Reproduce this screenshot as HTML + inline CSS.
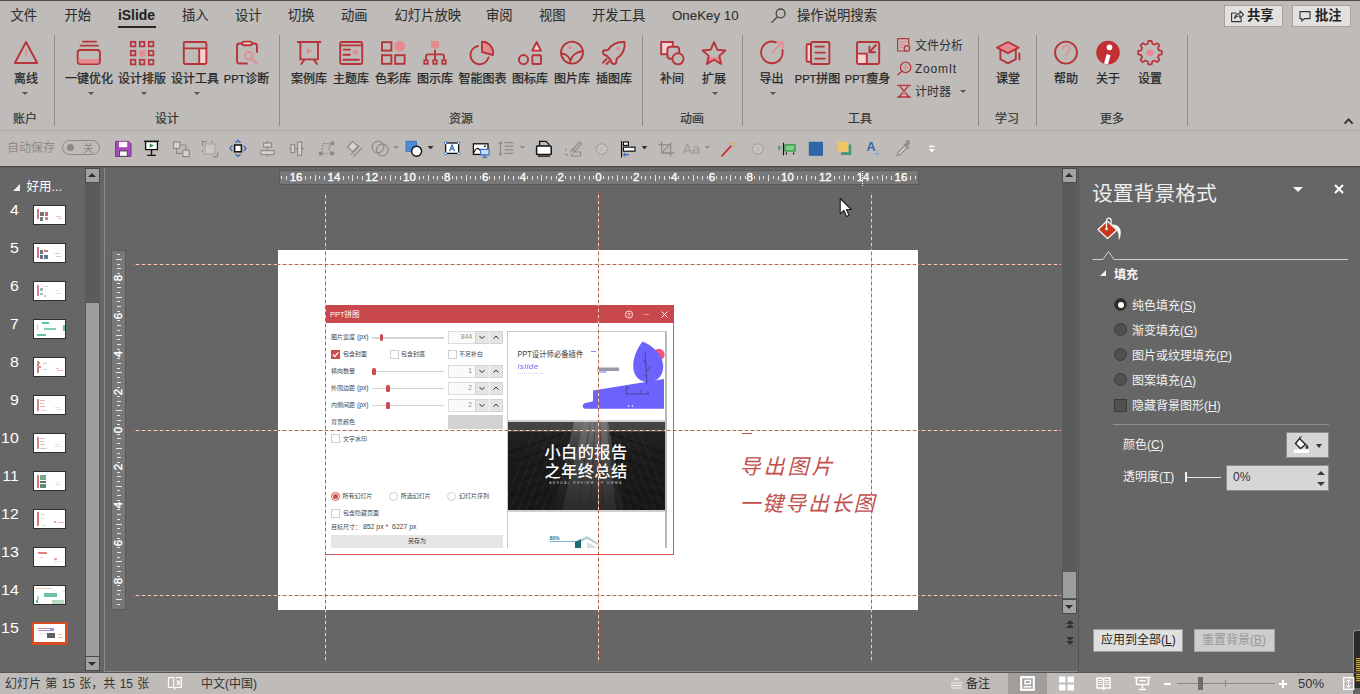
<!DOCTYPE html><html lang="zh-CN"><head><meta charset="utf-8"><title>iSlide - PowerPoint</title><style>
*{box-sizing:border-box;margin:0;padding:0}
html,body{width:1360px;height:694px;overflow:hidden;background:#666666}
body{position:relative;font-family:"Liberation Sans","Noto Sans CJK SC",sans-serif;font-size:12px;color:#2b2b2b}
.a{position:absolute}
.t{position:absolute;white-space:nowrap;line-height:1}
.c{transform:translateX(-50%)}
#ribbon{left:0;top:0;width:1360px;height:166px;background:#bfbbb8}
.tab{font-size:13.33px;top:8.7px;color:#2e2e2e;-webkit-text-stroke:0.08px #2e2e2e}
.lbl{font-size:12px;top:73.3px;color:#262626;-webkit-text-stroke:0.25px #262626}
.grp{font-size:12px;top:113.3px;color:#333;-webkit-text-stroke:0.2px #333}
.sep{width:1px;top:35px;height:91px;background:#8f8c8a}
.dd{width:0;height:0;border-left:3px solid transparent;border-right:3px solid transparent;border-top:3px solid #555}
svg{position:absolute;overflow:visible}
.w{color:#fff}
.pt{font-size:12px;color:#f2f2f2}
.d6{font-size:6px;color:#444}
</style></head><body>
<div id="ribbon" class="a">
<div class="a" style="left:0;top:0;width:1360px;height:1px;background:#4a4a4a"></div>
<div class="a" style="left:0;top:130px;width:1360px;height:1px;background:#aeaaa7"></div>
<div class="t tab" style="left:10.5px">文件</div>
<div class="t tab" style="left:64.5px">开始</div>
<div class="t tab" style="left:182px">插入</div>
<div class="t tab" style="left:235px">设计</div>
<div class="t tab" style="left:288px">切换</div>
<div class="t tab" style="left:341px">动画</div>
<div class="t tab" style="left:394.5px">幻灯片放映</div>
<div class="t tab" style="left:486px">审阅</div>
<div class="t tab" style="left:539px">视图</div>
<div class="t tab" style="left:592px">开发工具</div>
<div class="t tab" style="left:672px">OneKey 10</div>
<div class="t tab" style="left:797px">操作说明搜索</div>
<div class="t tab" style="left:118px;font-weight:bold;font-size:13.9px;color:#1f1f1f">iSlide</div>
<div class="a" style="left:118px;top:26px;width:38px;height:2px;background:#262626"></div>
<div class="a sep" style="left:54px"></div>
<div class="a sep" style="left:279px"></div>
<div class="a sep" style="left:642px"></div>
<div class="a sep" style="left:742px"></div>
<div class="a sep" style="left:978px"></div>
<div class="a sep" style="left:1036px"></div>
<div class="a sep" style="left:1187px"></div>
<div class="t lbl c" style="left:26px">离线</div>
<div class="t lbl c" style="left:89px">一键优化</div>
<div class="t lbl c" style="left:142px">设计排版</div>
<div class="t lbl c" style="left:195px">设计工具</div>
<div class="t lbl c" style="left:246.5px"><span style="font-size:11px">PPT</span>诊断</div>
<div class="t lbl c" style="left:309px">案例库</div>
<div class="t lbl c" style="left:351px">主题库</div>
<div class="t lbl c" style="left:393px">色彩库</div>
<div class="t lbl c" style="left:435px">图示库</div>
<div class="t lbl c" style="left:482.5px">智能图表</div>
<div class="t lbl c" style="left:530px">图标库</div>
<div class="t lbl c" style="left:572px">图片库</div>
<div class="t lbl c" style="left:614px">插图库</div>
<div class="t lbl c" style="left:672px">补间</div>
<div class="t lbl c" style="left:714px">扩展</div>
<div class="t lbl c" style="left:771.5px">导出</div>
<div class="t lbl c" style="left:817.5px"><span style="font-size:11px">PPT</span>拼图</div>
<div class="t lbl c" style="left:867.5px"><span style="font-size:11px">PPT</span>瘦身</div>
<div class="t lbl c" style="left:1008px">课堂</div>
<div class="t lbl c" style="left:1066px">帮助</div>
<div class="t lbl c" style="left:1108px">关于</div>
<div class="t lbl c" style="left:1150px">设置</div>
<div class="a dd" style="left:22px;top:92px"></div>
<div class="a dd" style="left:88px;top:92px"></div>
<div class="a dd" style="left:141px;top:92px"></div>
<div class="a dd" style="left:194px;top:92px"></div>
<div class="a dd" style="left:712px;top:92px"></div>
<div class="a dd" style="left:770px;top:92px"></div>
<div class="t grp c" style="left:25px">账户</div>
<div class="t grp c" style="left:167px">设计</div>
<div class="t grp c" style="left:461px">资源</div>
<div class="t grp c" style="left:692px">动画</div>
<div class="t grp c" style="left:860px">工具</div>
<div class="t grp c" style="left:1007px">学习</div>
<div class="t grp c" style="left:1112px">更多</div>
<div class="t" style="left:915px;top:40px;font-size:12px;color:#2e2e2e">文件分析</div>
<div class="t" style="left:915px;top:63px;font-size:12px;color:#2e2e2e"><span style="letter-spacing:0.75px">ZoomIt</span></div>
<div class="t" style="left:915px;top:86px;font-size:12px;color:#2e2e2e">计时器</div>
<div class="a dd" style="left:960px;top:90px"></div>
<div class="a" style="left:1224px;top:5px;width:59px;height:22px;background:#e3e1df;border:1px solid #a6a3a0"></div>
<div class="a" style="left:1292px;top:5px;width:59px;height:22px;background:#e3e1df;border:1px solid #a6a3a0"></div>
<div class="t" style="left:1247px;top:9px;font-size:13.33px;font-weight:bold;color:#222">共享</div>
<div class="t" style="left:1315px;top:9px;font-size:13.33px;font-weight:bold;color:#222">批注</div>
<svg style="left:0;top:0" width="1360" height="130" viewBox="0 0 1360 130" fill="none" stroke="#b7343a" stroke-width="1.9" stroke-linejoin="round" stroke-linecap="round">
<path d="M26 42 L37.2 63 H14.8 Z"/><path d="M26 49 V56" stroke="#e58a8e" stroke-width="1.4"/>
<path d="M83 41.6 H96 M80.5 45.6 H98"/><rect x="77.7" y="50" width="22.2" height="14" rx="2.5"/><path d="M78.5 59 H99 V61.5 a2 2 0 0 1 -2 2 H80.5 a2 2 0 0 1 -2 -2Z" fill="#e58a8e" stroke="none"/>
<rect x="130.8" y="41.8" width="4.6" height="4.6" stroke-width="1.7" stroke-linejoin="miter"/>
<rect x="139.8" y="41.8" width="4.6" height="4.6" stroke-width="1.7" stroke-linejoin="miter"/>
<rect x="148.8" y="41.8" width="4.6" height="4.6" stroke-width="1.7" stroke-linejoin="miter"/>
<rect x="130.8" y="50.8" width="4.6" height="4.6" stroke-width="1.7" stroke-linejoin="miter"/>
<rect x="139.4" y="50.4" width="6" height="6" fill="#e58a8e" stroke="none"/>
<rect x="148.8" y="50.8" width="4.6" height="4.6" stroke-width="1.7" stroke-linejoin="miter"/>
<rect x="130.8" y="59.8" width="4.6" height="4.6" stroke-width="1.7" stroke-linejoin="miter"/>
<rect x="139.8" y="59.8" width="4.6" height="4.6" stroke-width="1.7" stroke-linejoin="miter"/>
<rect x="148.8" y="59.8" width="4.6" height="4.6" stroke-width="1.7" stroke-linejoin="miter"/>
<rect x="200" y="49" width="6" height="14.5" fill="#f7d0d0" stroke="none"/><rect x="183.8" y="42" width="22.6" height="22" rx="1.5"/><path d="M184 48.4 H206 M199.2 48.4 V64"/>
<path d="M242 43.5 H239.5 a2.5 2.5 0 0 0 -2.5 2.5 V61 a2.5 2.5 0 0 0 2.5 2.5 H247 M252 43.5 H254.5 a2.5 2.5 0 0 1 2.5 2.5 V52"/><rect x="242.3" y="41.6" width="9.6" height="3.6" rx="1.8" fill="#f7d0d0"/>
<circle cx="248.8" cy="55.8" r="3.8" stroke="#e58a8e" stroke-width="1.8"/><path d="M251.8 58.8 L256.8 63.8" stroke="#e58a8e" stroke-width="1.8"/>
<path d="M297.8 42 H320.4 M300.4 42 V59.4 H318 V42 M304.5 59.6 L301.3 64 M313.8 59.6 L317 64"/><path d="M307 48 L312.5 51 L307 54Z" fill="#e58a8e" stroke="none"/>
<rect x="340.2" y="42" width="22" height="22" rx="1.5"/><path d="M340.5 45.4 H362 M343.5 49.6 H350 M343.5 54.8 H350 M343.5 59.8 H359"/><circle cx="355.4" cy="52.3" r="2.6" fill="#e58a8e" stroke="none"/>
<rect x="382" y="42.2" width="9.4" height="8.4" stroke-linejoin="miter"/><rect x="382" y="55.2" width="9.4" height="8.6" stroke-linejoin="miter"/><rect x="395.2" y="55.2" width="9.4" height="8.6" stroke-linejoin="miter"/><circle cx="399.8" cy="46.2" r="5.4" fill="#e58a8e" stroke="none"/>
<rect x="431" y="41" width="8" height="7.4" fill="#e58a8e" stroke="none"/><path d="M435 50.5 V59 M426 59 V56.4 a2 2 0 0 1 2 -2 H442 a2 2 0 0 1 2 2 V59"/>
<rect x="424.2" y="60.3" width="3.6" height="3.6" stroke-width="1.7" stroke-linejoin="miter"/>
<rect x="433.2" y="60.3" width="3.6" height="3.6" stroke-width="1.7" stroke-linejoin="miter"/>
<rect x="442.2" y="60.3" width="3.6" height="3.6" stroke-width="1.7" stroke-linejoin="miter"/>
<path d="M478 46 A9.2 9.2 0 1 0 488.5 57.5"/><path d="M482 41.8 A11 11 0 0 1 493 54.6 L482 51.8Z" fill="#e58a8e" stroke="none"/><path d="M482 41.8 A11.2 11.2 0 0 1 493 55 L482 52 Z"/>
<circle cx="523.5" cy="59.6" r="4.6"/><path d="M536.6 42 L541 50.6 H532.2Z" fill="#f7d0d0"/><rect x="532.4" y="55.2" width="8.6" height="8.8" rx="0.8"/>
<circle cx="572" cy="52.6" r="11"/><path d="M561.5 53.5 C567 54 570.5 58 570.5 63.5 M582.8 51 C576 52 571.5 56 570.8 60"/><circle cx="570" cy="47.4" r="1.8" fill="#e58a8e" stroke="none"/>
<path d="M624.6 42 C617 41.5 611 45 608 50 L603.5 50.5 C602.5 52.5 603 54 604.5 55 L606.5 55.5 L611 60.5 L611.5 63 C613 64.3 614.8 64.3 616 63 L616.8 58.5 C621.5 55.5 625.3 50 624.6 42Z"/><circle cx="618" cy="48.6" r="1.9" fill="#e58a8e" stroke="none"/><path d="M606.5 59 L602.8 62.8 M609 61.5 L606.5 64"/>
<rect x="661.2" y="42" width="11.6" height="12.2" fill="#f7d0d0" stroke-linejoin="miter"/><rect x="667.4" y="46.8" width="11.8" height="12" rx="3" fill="#bfbbb8"/><circle cx="678" cy="58.8" r="5.6" fill="#bfbbb8"/>
<clipPath id="sc"><rect x="700" y="57" width="30" height="10"/></clipPath>
<path d="M714.0 42.2 L717.3 49.7 L725.4 50.5 L719.3 55.9 L721.1 63.9 L714.0 59.8 L706.9 63.9 L708.7 55.9 L702.6 50.5 L710.7 49.7Z" fill="#e58a8e" stroke="none" clip-path="url(#sc)"/><path d="M714.0 42.2 L717.3 49.7 L725.4 50.5 L719.3 55.9 L721.1 63.9 L714.0 59.8 L706.9 63.9 L708.7 55.9 L702.6 50.5 L710.7 49.7Z"/>
<path d="M776 42.4 A10.8 10.8 0 1 0 782.4 50"/><path d="M772 52.6 L782.5 42.2 M777 42 H782.8 V47.8" stroke="#e58a8e" stroke-width="1.5"/>
<rect x="806.6" y="44.2" width="4.4" height="17.6" rx="1" fill="#f7d0d0"/><rect x="811" y="42" width="18.4" height="22" rx="1.8"/><path d="M815.4 46.6 H824 M815.4 52.6 H825 M815.4 58.6 H825"/>
<rect x="857" y="54" width="9.4" height="9.6" fill="#f7d0d0" stroke="none"/><rect x="857" y="42" width="22.2" height="22" rx="1.5"/><path d="M857.4 53.6 H866.8 V63.6 M876 45 L870 51.6 M869.4 46.6 V52.2 H875"/>
<g stroke-width="1.2"><path d="M905 51 H897.6 V38.6 H908.8 V44.5"/><path d="M900 41.6 H906.4 M900 44.4 H904.6 M900 47.2 H903" stroke="#e58a8e"/><circle cx="907" cy="48.4" r="2.8"/><circle cx="907" cy="48.4" r="0.8" fill="#e58a8e" stroke="none"/></g>
<g stroke-width="1.3"><circle cx="905.6" cy="67.4" r="5.2"/><path d="M901.8 71.2 L897.8 74.8"/><path d="M903.2 67.4 H908 M905.6 65 V69.8" stroke="#e58a8e"/></g>
<g stroke-width="1.4"><path d="M897.6 85.4 H910.4 M897.6 97 H910.4 M899.4 85.6 L908.6 96.8 M908.6 85.6 L899.4 96.8"/><path d="M901.5 94.5 L904 91.8 L906.5 94.5Z" fill="#e58a8e" stroke="none"/></g>
<path d="M1008 42 L1018.6 47.6 L1008 53.2 L997 47.6Z" fill="#e58a8e"/><path d="M1000.4 50.2 V59.2 L1008 63.4 L1015.8 59.2 V50.2"/><path d="M1019.4 53.4 V59.6" stroke-width="1.9"/>
<circle cx="1066" cy="52.6" r="11"/><path d="M1062.6 49 a3.5 3.5 0 1 1 5.2 3 c-1.4 0.9 -1.8 1.6 -1.8 3.2" stroke="#e58a8e" stroke-width="1.5"/><circle cx="1066" cy="58.6" r="1" fill="#e58a8e" stroke="none"/>
<circle cx="1108" cy="52.6" r="11.8" fill="#c12f33" stroke="none"/><circle cx="1109.5" cy="47.4" r="2.8" fill="#fff" stroke="none"/><path d="M1108.6 54.6 L1106 64" stroke="#fff" stroke-width="4" stroke-linecap="butt"/>
<path d="M1148.3 40.8 L1151.7 40.8 L1152.3 43.7 L1154.7 44.7 L1157.2 43.1 L1159.5 45.4 L1157.9 47.9 L1158.9 50.3 L1161.8 50.9 L1161.8 54.3 L1158.9 54.9 L1157.9 57.3 L1159.5 59.8 L1157.2 62.1 L1154.7 60.5 L1152.3 61.5 L1151.7 64.4 L1148.3 64.4 L1147.7 61.5 L1145.3 60.5 L1142.8 62.1 L1140.5 59.8 L1142.1 57.3 L1141.1 54.9 L1138.2 54.3 L1138.2 50.9 L1141.1 50.3 L1142.1 47.9 L1140.5 45.4 L1142.8 43.1 L1145.3 44.7 L1147.7 43.7Z" stroke-width="1.7"/><circle cx="1150" cy="52.8" r="3.4" fill="#e58a8e" stroke="none"/>
<g stroke="#444" stroke-width="1.3"><circle cx="780.6" cy="13.4" r="4.4"/><path d="M777.4 16.8 L771.8 22.4"/></g>
<g stroke="#333" stroke-width="1.1"><path d="M1236 13 H1231.6 V21.6 H1241.2 V18.5 M1234.5 18.5 C1235 15 1237.5 13.6 1240 13.6 V11 L1243.6 14.6 L1240 18 V15.8 C1237.8 15.8 1236 16.6 1234.5 18.5Z"/><path d="M1300 11.6 H1310 V18.6 H1304.4 L1301.8 21.2 V18.6 H1300Z"/></g>
<path d="M1344.6 123.6 L1348.6 119.4 L1352.6 123.6" stroke="#333" stroke-width="1.9" stroke-linecap="butt" stroke-linejoin="miter"/>
</svg>
<div class="t" style="left:7px;top:142px;font-size:12px;color:#8d8a88">自动保存</div>
<div class="a" style="left:62px;top:140px;width:38px;height:15px;border:1px solid #8a8785;border-radius:8px"></div>
<div class="a" style="left:67px;top:144px;width:7px;height:7px;border-radius:4px;background:#8a8785"></div>
<div class="t" style="left:83px;top:142.5px;font-size:10.5px;color:#8a8785">关</div>
<svg style="left:0;top:131px" width="1360" height="35" viewBox="0 131 1360 35" fill="none" stroke-width="1.2">
<path d="M115.6 141.4 H128.6 L131 143.8 V156.4 H115.6Z" fill="#a64fb6" stroke="#7a2f8a" stroke-width="1"/><rect x="119" y="141.8" width="8.2" height="5.4" fill="#fff" stroke="none"/><rect x="119.6" y="151" width="7.6" height="5.2" fill="#fff" stroke="#3a3a3a" stroke-width="0.8"/>
<path d="M144 141.3 H159" stroke="#111" stroke-width="1.4"/><rect x="145.6" y="141.6" width="11.8" height="8" fill="#fff" stroke="#111" stroke-width="1.3"/><path d="M149.6 143.4 L154 145.6 L149.6 147.8Z" fill="#2d9a4b" stroke="none"/><path d="M151.5 149.8 V155 M147.2 155.4 H155.8" stroke="#111" stroke-width="1.4"/>
<g stroke="#8e8b89"><rect x="173.5" y="142" width="6.4" height="6.4" fill="#d5d2d0"/><rect x="182.8" y="150.2" width="6.4" height="6.4" fill="#d5d2d0"/><path d="M180 145 H186 V150 M176.6 148.5 V153.4 H182.6"/></g>
<g stroke="#8e8b89"><rect x="205" y="144" width="10" height="10" fill="#cbc8c5" stroke="#a9a6a3"/><path d="M202.5 146 V141.6 H207 M213 156.6 H217.6 V152 M202.5 150 V152 M211 141.6 H213"/></g>
<rect x="234.6" y="145" width="6.8" height="6.8" fill="#fff" stroke="#111" stroke-width="1.5"/><path d="M235.4 142.6 L238 140.4 L240.6 142.6 M235.4 154.2 L238 156.4 L240.6 154.2 M232.2 145.8 L230 148.4 L232.2 151 M243.8 145.8 L246 148.4 L243.8 151" stroke="#3f6ec0" stroke-width="1.4"/>
<g stroke="#8e8b89"><rect x="263.5" y="143" width="8" height="4" fill="#d5d2d0"/><rect x="261" y="150.6" width="13" height="4" fill="#d5d2d0"/><path d="M267.5 141 V143 M267.5 147 V150.6 M267.5 154.6 V157"/></g>
<g stroke="#8e8b89"><rect x="291" y="144.6" width="3.6" height="8" fill="#d5d2d0"/><rect x="297.6" y="142" width="4" height="13.4" fill="#d5d2d0"/><path d="M289 148.6 H291 M294.6 148.6 H297.6 M301.6 148.6 H304"/></g>
<g stroke="#8e8b89"><path d="M321 153.5 L323.5 143.6 H331.6 L328.5 148 L331.6 153.5Z" stroke-dasharray="2 1.4"/><rect x="319.4" y="152.2" width="2.6" height="2.6" fill="#8e8b89"/><rect x="331" y="142" width="2.6" height="2.6" fill="#8e8b89"/><rect x="331" y="152.2" width="2.6" height="2.6" fill="#8e8b89"/></g>
<g stroke="#8e8b89"><path d="M352.5 141.6 L358 146 L353 151.6 L347.6 147Z" fill="#d8d5d3"/><path d="M353.5 156.6 L362.4 147.4 M351 154.6 L359.6 145.6"/></g>
<g stroke="#8e8b89"><circle cx="378" cy="147" r="5.8"/><circle cx="382.4" cy="150" r="5.8"/></g><path d="M393.4 146 H398.6 L396 149Z" fill="#8e8b89"/>
<rect x="406" y="141.2" width="10.6" height="10.2" fill="#4d8ad8" stroke="#3a6fb8" stroke-width="0.8"/><circle cx="416.6" cy="151.2" r="5" fill="#fff" stroke="#111" stroke-width="1.4"/><path d="M427.6 146 H433.6 L430.6 149.4Z" fill="#333"/>
<rect x="445.6" y="143" width="13" height="10.4" fill="#fff" stroke="#111" stroke-width="1.3"/><path d="M449.6 151.2 L452.1 145 L454.6 151.2 M450.5 149.2 H453.7" stroke="#3f6ec0" stroke-width="1.3"/>
<circle cx="445.6" cy="143" r="1.3" fill="#fff" stroke="#3f6ec0" stroke-width="0.9"/>
<circle cx="458.6" cy="143" r="1.3" fill="#fff" stroke="#3f6ec0" stroke-width="0.9"/>
<circle cx="445.6" cy="153.4" r="1.3" fill="#fff" stroke="#3f6ec0" stroke-width="0.9"/>
<circle cx="458.6" cy="153.4" r="1.3" fill="#fff" stroke="#3f6ec0" stroke-width="0.9"/>
<rect x="473.4" y="143.8" width="14.6" height="10.6" fill="#fff" stroke="#111" stroke-width="1.3"/><path d="M474 152.5 C475.5 148 478 147 480 150.5" stroke="#111" stroke-width="1.1"/><rect x="484.2" y="145.4" width="1.6" height="1.6" fill="#111"/><rect x="480.6" y="149.4" width="8.4" height="5.4" fill="#cfe0f6" stroke="#3f6ec0" stroke-width="1.2"/><path d="M484.8 155 V157 M482.4 157.4 H487.2" stroke="#3f6ec0" stroke-width="1.2"/>
<g stroke="#8e8b89"><path d="M504.6 142.6 H513.6 M504.6 146.2 H513.6 M504.6 149.8 H513.6 M504.6 153.4 H513.6 M500.4 142.4 V155 M498.6 144.2 L500.4 142.2 L502.2 144.2 M498.6 153.2 L500.4 155.2 L502.2 153.2"/></g><path d="M520 146 H525 L522.5 149Z" fill="#8e8b89"/>
<path d="M539.6 146 V141.4 H546 L549 144.4 V146" stroke="#111" stroke-width="1.3"/><rect x="536.6" y="146" width="14.6" height="8.6" rx="0.8" fill="#fff" stroke="#111" stroke-width="1.5"/><path d="M538 156.2 H550" stroke="#111" stroke-width="1.2"/>
<g stroke="#8e8b89"><path d="M570.5 152 L579.5 142 L581.4 143.8 L573 153.4"/><path d="M565.6 150.4 V148.4 M565.6 154.8 H568 M572 148.6 L575.6 152 H580.6 V156 H571.6 V154"/><path d="M565.6 153.4 V155" /></g>
<circle cx="601.7" cy="149" r="5.2" stroke="#a9a6a3" stroke-width="2.2" stroke-dasharray="2.2 1"/><circle cx="601.7" cy="149" r="3.6" stroke="#d4d1cf" stroke-width="1"/>
<circle cx="757.8" cy="149" r="5.2" stroke="#a9a6a3" stroke-width="2.2" stroke-dasharray="2.2 1"/><circle cx="757.8" cy="149" r="3.6" stroke="#d4d1cf" stroke-width="1"/>
<path d="M621.5 141 V157.4" stroke="#111" stroke-width="1.1"/><rect x="623.4" y="142" width="5" height="3.4" fill="#fff" stroke="#111" stroke-width="1.2"/><rect x="623.4" y="147.2" width="11.6" height="4" fill="#fff" stroke="#111" stroke-width="1.2"/><path d="M623.4 154.6 H629 M625.4 152.8 L623.4 154.6 L625.4 156.4" stroke="#3f6ec0" stroke-width="1.1"/><path d="M641.6 146 H647.4 L644.5 149.4Z" fill="#333"/>
<g stroke="#8e8b89" stroke-width="1.3"><path d="M661.6 141.4 V153 H674 M658.4 144.6 H670.6 V156.6 M662 152.6 L671.4 142.6"/></g>
<text x="682.6" y="154.2" font-family="Liberation Sans,sans-serif" font-size="14.5" fill="#9c9996">Aa</text><path d="M705 146 H710 L707.5 149Z" fill="#8e8b89"/>
<path d="M721.6 156.4 L731.4 145.6" stroke="#cc3236" stroke-width="1.9"/><path d="M733 141.6 V144 M735.6 146.4 H733.4 M734.6 142.8 L733.2 144.2 M729.6 142.4 L730.6 143.6" stroke="#e8a03a" stroke-width="1"/>
<rect x="785" y="144.8" width="10" height="6.2" fill="#7fcf86" stroke="#2f8f43" stroke-width="1.2"/><path d="M783.5 142.6 V155.4" stroke="#111" stroke-width="1.1"/><path d="M779 145.6 V150.6 M779 147.8 H781.6" stroke="#2f8f43" stroke-width="1.1"/><path d="M786.4 152.6 V154.4 M793.6 152.6 V154.4" stroke="#111" stroke-width="1.2"/>
<rect x="808.8" y="141.8" width="14.2" height="14" fill="#2f64a8"/>
<path d="M850 144.6 V153.6 H841" stroke="#3f9a6a" stroke-width="2.6"/><rect x="838" y="141.8" width="10.2" height="9.8" fill="#f2c463"/>
<text x="866.6" y="151.4" font-family="Liberation Sans,sans-serif" font-weight="bold" font-size="12.5" fill="#3a66b0">A</text><path d="M874.6 153.6 H880 M877.3 151 V156.4" stroke="#7fa6dc" stroke-width="1"/>
<g stroke="#8e8b89"><path d="M897 155.6 L898 152.6 L905.4 145 L907.6 147.2 L900 154.6Z" fill="#d5d2d0"/><path d="M904.2 143.8 L908.8 148.4 M906.6 146 L909 143.4 a1.6 1.6 0 0 0 -2.2 -2.2Z" stroke-width="1.8"/></g>
<path d="M929 146.4 H934.6" stroke="#fff" stroke-width="1.4"/><path d="M928.8 149 H934.8 L931.8 152.4Z" fill="#fff"/>
</svg>
</div>
<div class="a" style="left:0;top:166px;width:1360px;height:1px;background:#4c4c4c"></div>
<div class="a" style="left:0;top:167px;width:1360px;height:1px;background:#5c5c5c"></div>
<div class="a" style="left:85px;top:168px;width:15px;height:503px;background:#5b5b5b"></div>
<div class="a" style="left:85px;top:168px;width:15px;height:15px;background:#a3a3a3;border:1px solid #4a4a4a"></div>
<div class="a" style="left:88px;top:173px;width:0;height:0;border-left:4px solid transparent;border-right:4px solid transparent;border-bottom:4px solid #2e2e2e"></div>
<div class="a" style="left:85px;top:302px;width:15px;height:355px;background:#9c9c9c;border:1px solid #555"></div>
<div class="a" style="left:85px;top:656px;width:15px;height:15px;background:#a3a3a3;border:1px solid #4a4a4a"></div>
<div class="a" style="left:88px;top:662px;width:0;height:0;border-left:4px solid transparent;border-right:4px solid transparent;border-top:4px solid #2e2e2e"></div>
<div class="a" style="left:104px;top:168px;width:1px;height:504px;background:#8b8b8b"></div>
<div class="a" style="left:104px;top:671px;width:975px;height:1px;background:#8b8b8b"></div>
<div class="a" style="left:13px;top:184px;width:0;height:0;border-left:7px solid transparent;border-bottom:7px solid #f0f0f0"></div>
<div class="t w" style="left:26.5px;top:181px;font-size:12.5px">好用...</div>
<div class="t w" style="left:0;width:18.8px;text-align:right;top:202.4px;font-size:15px;transform:scaleX(1.06);transform-origin:100% 50%">4</div>
<div class="a" style="left:33px;top:205px;width:33px;height:20px;background:#fff;border:1px solid #2f2f2f;overflow:hidden"><div class="a" style="left:0;top:0;opacity:0.72"><i class="a" style="left:3px;top:3px;width:1.5px;height:10px;background:#c44"></i><i class="a" style="left:6px;top:6px;width:4px;height:4px;background:#345"></i><i class="a" style="left:11px;top:6px;width:3px;height:4px;background:#a34"></i><i class="a" style="left:6px;top:11px;width:3px;height:4px;background:#345"></i><i class="a" style="left:11px;top:11px;width:3px;height:3px;background:#b55"></i><i class="a" style="left:22px;top:10px;width:5px;height:1px;background:#daa"></i><i class="a" style="left:24px;top:12px;width:4px;height:1px;background:#daa"></i></div></div>
<div class="t w" style="left:0;width:18.8px;text-align:right;top:240.4px;font-size:15px;transform:scaleX(1.06);transform-origin:100% 50%">5</div>
<div class="a" style="left:33px;top:243px;width:33px;height:20px;background:#fff;border:1px solid #2f2f2f;overflow:hidden"><div class="a" style="left:0;top:0;opacity:0.72"><i class="a" style="left:3px;top:3px;width:1.5px;height:11px;background:#c44"></i><i class="a" style="left:6px;top:6px;width:3px;height:4px;background:#345"></i><i class="a" style="left:10px;top:6px;width:4px;height:2px;background:#b44"></i><i class="a" style="left:6px;top:11px;width:3px;height:4px;background:#245"></i><i class="a" style="left:10px;top:11px;width:4px;height:4px;background:#246"></i><i class="a" style="left:21px;top:9px;width:5px;height:1px;background:#daa"></i><i class="a" style="left:22px;top:12px;width:5px;height:1px;background:#daa"></i></div></div>
<div class="t w" style="left:0;width:18.8px;text-align:right;top:278.4px;font-size:15px;transform:scaleX(1.06);transform-origin:100% 50%">6</div>
<div class="a" style="left:33px;top:281px;width:33px;height:20px;background:#fff;border:1px solid #2f2f2f;overflow:hidden"><div class="a" style="left:0;top:0;opacity:0.72"><i class="a" style="left:3px;top:3px;width:1.5px;height:11px;background:#c55"></i><i class="a" style="left:6px;top:6px;width:3px;height:3px;background:#79a"></i><i class="a" style="left:10px;top:4px;width:4px;height:1px;background:#bcd"></i><i class="a" style="left:6px;top:11px;width:3px;height:2px;background:#7aa"></i><i class="a" style="left:10px;top:13px;width:2px;height:2px;background:#9bb"></i><i class="a" style="left:21px;top:8px;width:4px;height:1px;background:#ecc"></i><i class="a" style="left:22px;top:11px;width:5px;height:1px;background:#ecc"></i></div></div>
<div class="t w" style="left:0;width:18.8px;text-align:right;top:316.4px;font-size:15px;transform:scaleX(1.06);transform-origin:100% 50%">7</div>
<div class="a" style="left:33px;top:319px;width:33px;height:20px;background:#fff;border:1px solid #2f2f2f;overflow:hidden"><div class="a" style="left:0;top:0;opacity:0.72"><i class="a" style="left:8px;top:2px;width:7px;height:1.5px;background:#2a8"></i><i class="a" style="left:29px;top:5px;width:1.5px;height:6px;background:#2a8"></i><i class="a" style="left:3px;top:14px;width:9px;height:2px;background:#2a8"></i><i class="a" style="left:10px;top:8px;width:12px;height:1.5px;background:#5b9"></i><i class="a" style="left:3px;top:4px;width:1px;height:6px;background:#8cb"></i></div></div>
<div class="t w" style="left:0;width:18.8px;text-align:right;top:354.4px;font-size:15px;transform:scaleX(1.06);transform-origin:100% 50%">8</div>
<div class="a" style="left:33px;top:357px;width:33px;height:20px;background:#fff;border:1px solid #2f2f2f;overflow:hidden"><div class="a" style="left:0;top:0;opacity:0.72"><i class="a" style="left:3px;top:3px;width:2px;height:12px;background:#c44"></i><i class="a" style="left:3px;top:4px;width:3px;height:2px;background:#c66"></i><i class="a" style="left:3px;top:8px;width:4px;height:2px;background:#c66"></i><i class="a" style="left:9px;top:5px;width:4px;height:1px;background:#abc"></i><i class="a" style="left:9px;top:11px;width:4px;height:1px;background:#abc"></i><i class="a" style="left:22px;top:10px;width:3px;height:1px;background:#e99"></i><i class="a" style="left:23px;top:12px;width:6px;height:1px;background:#e99"></i></div></div>
<div class="t w" style="left:0;width:18.8px;text-align:right;top:392.4px;font-size:15px;transform:scaleX(1.06);transform-origin:100% 50%">9</div>
<div class="a" style="left:33px;top:395px;width:33px;height:20px;background:#fff;border:1px solid #2f2f2f;overflow:hidden"><div class="a" style="left:0;top:0;opacity:0.72"><i class="a" style="left:3px;top:3px;width:1.5px;height:12px;background:#c55"></i><i class="a" style="left:6px;top:4px;width:5px;height:1px;background:#d99"></i><i class="a" style="left:6px;top:7px;width:4px;height:1px;background:#bbb"></i><i class="a" style="left:6px;top:10px;width:5px;height:1px;background:#d99"></i><i class="a" style="left:7px;top:14px;width:5px;height:1px;background:#bcd"></i><i class="a" style="left:21px;top:11px;width:5px;height:1px;background:#ecc"></i><i class="a" style="left:22px;top:13px;width:6px;height:1px;background:#ecc"></i></div></div>
<div class="t w" style="left:0;width:18.8px;text-align:right;top:430.4px;font-size:15px;transform:scaleX(1.06);transform-origin:100% 50%">10</div>
<div class="a" style="left:33px;top:433px;width:33px;height:20px;background:#fff;border:1px solid #2f2f2f;overflow:hidden"><div class="a" style="left:0;top:0;opacity:0.72"><i class="a" style="left:3px;top:3px;width:1.5px;height:12px;background:#c55"></i><i class="a" style="left:6px;top:4px;width:5px;height:1px;background:#caa"></i><i class="a" style="left:6px;top:7px;width:4px;height:1px;background:#bbb"></i><i class="a" style="left:6px;top:10px;width:5px;height:1px;background:#caa"></i><i class="a" style="left:6px;top:14px;width:7px;height:1px;background:#bbb"></i><i class="a" style="left:21px;top:10px;width:4px;height:1px;background:#ecc"></i><i class="a" style="left:21px;top:12px;width:6px;height:1px;background:#ecc"></i></div></div>
<div class="t w" style="left:0;width:18.8px;text-align:right;top:468.4px;font-size:15px;transform:scaleX(1.06);transform-origin:100% 50%">11</div>
<div class="a" style="left:33px;top:471px;width:33px;height:20px;background:#fff;border:1px solid #2f2f2f;overflow:hidden"><div class="a" style="left:0;top:0;opacity:0.72"><i class="a" style="left:3px;top:3px;width:1.5px;height:13px;background:#c44"></i><i class="a" style="left:6px;top:3px;width:6px;height:5px;background:#486"></i><i class="a" style="left:6px;top:9px;width:6px;height:2px;background:#333"></i><i class="a" style="left:6px;top:12px;width:6px;height:4px;background:#264"></i><i class="a" style="left:21px;top:10px;width:4px;height:1px;background:#ecc"></i><i class="a" style="left:22px;top:12px;width:5px;height:1px;background:#ecc"></i></div></div>
<div class="t w" style="left:0;width:18.8px;text-align:right;top:506.4px;font-size:15px;transform:scaleX(1.06);transform-origin:100% 50%">12</div>
<div class="a" style="left:33px;top:509px;width:33px;height:20px;background:#fff;border:1px solid #2f2f2f;overflow:hidden"><div class="a" style="left:0;top:0;opacity:0.72"><i class="a" style="left:3px;top:2px;width:1.5px;height:14px;background:#c44"></i><i class="a" style="left:7px;top:4px;width:4px;height:1px;background:#bcd"></i><i class="a" style="left:7px;top:8px;width:3px;height:1px;background:#ccc"></i><i class="a" style="left:8px;top:15px;width:5px;height:1px;background:#bdd"></i><i class="a" style="left:20px;top:11px;width:2px;height:2px;background:#d88"></i><i class="a" style="left:24px;top:12px;width:6px;height:1px;background:#e99"></i></div></div>
<div class="t w" style="left:0;width:18.8px;text-align:right;top:544.4px;font-size:15px;transform:scaleX(1.06);transform-origin:100% 50%">13</div>
<div class="a" style="left:33px;top:547px;width:33px;height:20px;background:#fff;border:1px solid #2f2f2f;overflow:hidden"><div class="a" style="left:0;top:0;opacity:0.72"><i class="a" style="left:4px;top:4px;width:9px;height:1.5px;background:#c55"></i><i class="a" style="left:5px;top:9px;width:4px;height:1px;background:#ecc"></i><i class="a" style="left:20px;top:10px;width:3px;height:2px;background:#d88"></i><i class="a" style="left:20px;top:13px;width:5px;height:1px;background:#ecc"></i></div></div>
<div class="t w" style="left:0;width:18.8px;text-align:right;top:582.4px;font-size:15px;transform:scaleX(1.06);transform-origin:100% 50%">14</div>
<div class="a" style="left:33px;top:585px;width:33px;height:20px;background:#fff;border:1px solid #2f2f2f;overflow:hidden"><div class="a" style="left:0;top:0;opacity:0.72"><i class="a" style="left:2px;top:2px;width:16px;height:1px;background:#eb8"></i><i class="a" style="left:10px;top:7px;width:13px;height:4px;background:#3a8"></i><i class="a" style="left:3px;top:10px;width:2px;height:4px;background:#8c9"></i><i class="a" style="left:18px;top:14px;width:12px;height:4px;background:#9ca"></i><i class="a" style="left:2px;top:14px;width:2px;height:3px;background:#2a7"></i><i class="a" style="left:29px;top:4px;width:2px;height:2px;background:#ddd"></i></div></div>
<div class="t w" style="left:0;width:18.8px;text-align:right;top:620.4px;font-size:15px;transform:scaleX(1.06);transform-origin:100% 50%">15</div>
<div class="a" style="left:31.7px;top:621.5px;width:36.6px;height:23.4px;background:#d84c22"></div>
<div class="a" style="left:33px;top:623px;width:33px;height:20px;background:#fff;border:1px solid #d84c22;overflow:hidden"><div class="a" style="left:0;top:0;opacity:0.72"><i class="a" style="left:4px;top:4px;width:15px;height:1px;background:#b66"></i><i class="a" style="left:5px;top:6px;width:13px;height:1px;background:#85c"></i><i class="a" style="left:16px;top:4px;width:4px;height:3px;background:#76d"></i><i class="a" style="left:5px;top:9px;width:8px;height:1px;background:#ddd"></i><i class="a" style="left:13px;top:9px;width:8px;height:5px;background:#222"></i><i class="a" style="left:24px;top:10px;width:4px;height:1px;background:#da6"></i><i class="a" style="left:24px;top:13px;width:5px;height:1px;background:#da6"></i></div></div>
<div class="a" style="left:279px;top:170px;width:640px;height:15px;background:#787878;border:1px solid #5a5a5a"></div>
<i class="a" style="left:281.4px;top:176.0px;width:1px;height:3px;background:#e4e4e4"></i>
<i class="a" style="left:286.2px;top:175.5px;width:1px;height:4px;background:#e4e4e4"></i>
<i class="a" style="left:305.1px;top:175.5px;width:1px;height:4px;background:#e4e4e4"></i>
<i class="a" style="left:309.8px;top:176.0px;width:1px;height:3px;background:#e4e4e4"></i>
<i class="a" style="left:314.5px;top:174.5px;width:1px;height:6px;background:#e4e4e4"></i>
<i class="a" style="left:319.2px;top:176.0px;width:1px;height:3px;background:#e4e4e4"></i>
<i class="a" style="left:324.0px;top:175.5px;width:1px;height:4px;background:#e4e4e4"></i>
<i class="a" style="left:342.9px;top:175.5px;width:1px;height:4px;background:#e4e4e4"></i>
<i class="a" style="left:347.6px;top:176.0px;width:1px;height:3px;background:#e4e4e4"></i>
<i class="a" style="left:352.3px;top:174.5px;width:1px;height:6px;background:#e4e4e4"></i>
<i class="a" style="left:357.0px;top:176.0px;width:1px;height:3px;background:#e4e4e4"></i>
<i class="a" style="left:361.8px;top:175.5px;width:1px;height:4px;background:#e4e4e4"></i>
<i class="a" style="left:380.6px;top:175.5px;width:1px;height:4px;background:#e4e4e4"></i>
<i class="a" style="left:385.4px;top:176.0px;width:1px;height:3px;background:#e4e4e4"></i>
<i class="a" style="left:390.1px;top:174.5px;width:1px;height:6px;background:#e4e4e4"></i>
<i class="a" style="left:394.8px;top:176.0px;width:1px;height:3px;background:#e4e4e4"></i>
<i class="a" style="left:399.6px;top:175.5px;width:1px;height:4px;background:#e4e4e4"></i>
<i class="a" style="left:418.5px;top:175.5px;width:1px;height:4px;background:#e4e4e4"></i>
<i class="a" style="left:423.2px;top:176.0px;width:1px;height:3px;background:#e4e4e4"></i>
<i class="a" style="left:427.9px;top:174.5px;width:1px;height:6px;background:#e4e4e4"></i>
<i class="a" style="left:432.6px;top:176.0px;width:1px;height:3px;background:#e4e4e4"></i>
<i class="a" style="left:437.4px;top:175.5px;width:1px;height:4px;background:#e4e4e4"></i>
<i class="a" style="left:442.1px;top:176.0px;width:1px;height:3px;background:#e4e4e4"></i>
<i class="a" style="left:451.5px;top:176.0px;width:1px;height:3px;background:#e4e4e4"></i>
<i class="a" style="left:456.2px;top:175.5px;width:1px;height:4px;background:#e4e4e4"></i>
<i class="a" style="left:461.0px;top:176.0px;width:1px;height:3px;background:#e4e4e4"></i>
<i class="a" style="left:465.7px;top:174.5px;width:1px;height:6px;background:#e4e4e4"></i>
<i class="a" style="left:470.4px;top:176.0px;width:1px;height:3px;background:#e4e4e4"></i>
<i class="a" style="left:475.1px;top:175.5px;width:1px;height:4px;background:#e4e4e4"></i>
<i class="a" style="left:479.9px;top:176.0px;width:1px;height:3px;background:#e4e4e4"></i>
<i class="a" style="left:489.3px;top:176.0px;width:1px;height:3px;background:#e4e4e4"></i>
<i class="a" style="left:494.1px;top:175.5px;width:1px;height:4px;background:#e4e4e4"></i>
<i class="a" style="left:498.8px;top:176.0px;width:1px;height:3px;background:#e4e4e4"></i>
<i class="a" style="left:503.5px;top:174.5px;width:1px;height:6px;background:#e4e4e4"></i>
<i class="a" style="left:508.2px;top:176.0px;width:1px;height:3px;background:#e4e4e4"></i>
<i class="a" style="left:513.0px;top:175.5px;width:1px;height:4px;background:#e4e4e4"></i>
<i class="a" style="left:517.7px;top:176.0px;width:1px;height:3px;background:#e4e4e4"></i>
<i class="a" style="left:527.1px;top:176.0px;width:1px;height:3px;background:#e4e4e4"></i>
<i class="a" style="left:531.9px;top:175.5px;width:1px;height:4px;background:#e4e4e4"></i>
<i class="a" style="left:536.6px;top:176.0px;width:1px;height:3px;background:#e4e4e4"></i>
<i class="a" style="left:541.3px;top:174.5px;width:1px;height:6px;background:#e4e4e4"></i>
<i class="a" style="left:546.0px;top:176.0px;width:1px;height:3px;background:#e4e4e4"></i>
<i class="a" style="left:550.8px;top:175.5px;width:1px;height:4px;background:#e4e4e4"></i>
<i class="a" style="left:555.5px;top:176.0px;width:1px;height:3px;background:#e4e4e4"></i>
<i class="a" style="left:564.9px;top:176.0px;width:1px;height:3px;background:#e4e4e4"></i>
<i class="a" style="left:569.6px;top:175.5px;width:1px;height:4px;background:#e4e4e4"></i>
<i class="a" style="left:574.4px;top:176.0px;width:1px;height:3px;background:#e4e4e4"></i>
<i class="a" style="left:579.1px;top:174.5px;width:1px;height:6px;background:#e4e4e4"></i>
<i class="a" style="left:583.8px;top:176.0px;width:1px;height:3px;background:#e4e4e4"></i>
<i class="a" style="left:588.5px;top:175.5px;width:1px;height:4px;background:#e4e4e4"></i>
<i class="a" style="left:593.3px;top:176.0px;width:1px;height:3px;background:#e4e4e4"></i>
<i class="a" style="left:602.7px;top:176.0px;width:1px;height:3px;background:#e4e4e4"></i>
<i class="a" style="left:607.5px;top:175.5px;width:1px;height:4px;background:#e4e4e4"></i>
<i class="a" style="left:612.2px;top:176.0px;width:1px;height:3px;background:#e4e4e4"></i>
<i class="a" style="left:616.9px;top:174.5px;width:1px;height:6px;background:#e4e4e4"></i>
<i class="a" style="left:621.6px;top:176.0px;width:1px;height:3px;background:#e4e4e4"></i>
<i class="a" style="left:626.4px;top:175.5px;width:1px;height:4px;background:#e4e4e4"></i>
<i class="a" style="left:631.1px;top:176.0px;width:1px;height:3px;background:#e4e4e4"></i>
<i class="a" style="left:640.5px;top:176.0px;width:1px;height:3px;background:#e4e4e4"></i>
<i class="a" style="left:645.2px;top:175.5px;width:1px;height:4px;background:#e4e4e4"></i>
<i class="a" style="left:650.0px;top:176.0px;width:1px;height:3px;background:#e4e4e4"></i>
<i class="a" style="left:654.7px;top:174.5px;width:1px;height:6px;background:#e4e4e4"></i>
<i class="a" style="left:659.4px;top:176.0px;width:1px;height:3px;background:#e4e4e4"></i>
<i class="a" style="left:664.1px;top:175.5px;width:1px;height:4px;background:#e4e4e4"></i>
<i class="a" style="left:668.9px;top:176.0px;width:1px;height:3px;background:#e4e4e4"></i>
<i class="a" style="left:678.3px;top:176.0px;width:1px;height:3px;background:#e4e4e4"></i>
<i class="a" style="left:683.0px;top:175.5px;width:1px;height:4px;background:#e4e4e4"></i>
<i class="a" style="left:687.8px;top:176.0px;width:1px;height:3px;background:#e4e4e4"></i>
<i class="a" style="left:692.5px;top:174.5px;width:1px;height:6px;background:#e4e4e4"></i>
<i class="a" style="left:697.2px;top:176.0px;width:1px;height:3px;background:#e4e4e4"></i>
<i class="a" style="left:702.0px;top:175.5px;width:1px;height:4px;background:#e4e4e4"></i>
<i class="a" style="left:706.7px;top:176.0px;width:1px;height:3px;background:#e4e4e4"></i>
<i class="a" style="left:716.1px;top:176.0px;width:1px;height:3px;background:#e4e4e4"></i>
<i class="a" style="left:720.9px;top:175.5px;width:1px;height:4px;background:#e4e4e4"></i>
<i class="a" style="left:725.6px;top:176.0px;width:1px;height:3px;background:#e4e4e4"></i>
<i class="a" style="left:730.3px;top:174.5px;width:1px;height:6px;background:#e4e4e4"></i>
<i class="a" style="left:735.0px;top:176.0px;width:1px;height:3px;background:#e4e4e4"></i>
<i class="a" style="left:739.8px;top:175.5px;width:1px;height:4px;background:#e4e4e4"></i>
<i class="a" style="left:744.5px;top:176.0px;width:1px;height:3px;background:#e4e4e4"></i>
<i class="a" style="left:753.9px;top:176.0px;width:1px;height:3px;background:#e4e4e4"></i>
<i class="a" style="left:758.6px;top:175.5px;width:1px;height:4px;background:#e4e4e4"></i>
<i class="a" style="left:763.4px;top:176.0px;width:1px;height:3px;background:#e4e4e4"></i>
<i class="a" style="left:768.1px;top:174.5px;width:1px;height:6px;background:#e4e4e4"></i>
<i class="a" style="left:772.8px;top:176.0px;width:1px;height:3px;background:#e4e4e4"></i>
<i class="a" style="left:777.5px;top:175.5px;width:1px;height:4px;background:#e4e4e4"></i>
<i class="a" style="left:796.5px;top:175.5px;width:1px;height:4px;background:#e4e4e4"></i>
<i class="a" style="left:801.2px;top:176.0px;width:1px;height:3px;background:#e4e4e4"></i>
<i class="a" style="left:805.9px;top:174.5px;width:1px;height:6px;background:#e4e4e4"></i>
<i class="a" style="left:810.6px;top:176.0px;width:1px;height:3px;background:#e4e4e4"></i>
<i class="a" style="left:815.4px;top:175.5px;width:1px;height:4px;background:#e4e4e4"></i>
<i class="a" style="left:834.2px;top:175.5px;width:1px;height:4px;background:#e4e4e4"></i>
<i class="a" style="left:839.0px;top:176.0px;width:1px;height:3px;background:#e4e4e4"></i>
<i class="a" style="left:843.7px;top:174.5px;width:1px;height:6px;background:#e4e4e4"></i>
<i class="a" style="left:848.4px;top:176.0px;width:1px;height:3px;background:#e4e4e4"></i>
<i class="a" style="left:853.1px;top:175.5px;width:1px;height:4px;background:#e4e4e4"></i>
<i class="a" style="left:872.0px;top:175.5px;width:1px;height:4px;background:#e4e4e4"></i>
<i class="a" style="left:876.8px;top:176.0px;width:1px;height:3px;background:#e4e4e4"></i>
<i class="a" style="left:881.5px;top:174.5px;width:1px;height:6px;background:#e4e4e4"></i>
<i class="a" style="left:886.2px;top:176.0px;width:1px;height:3px;background:#e4e4e4"></i>
<i class="a" style="left:891.0px;top:175.5px;width:1px;height:4px;background:#e4e4e4"></i>
<i class="a" style="left:909.8px;top:175.5px;width:1px;height:4px;background:#e4e4e4"></i>
<i class="a" style="left:914.6px;top:176.0px;width:1px;height:3px;background:#e4e4e4"></i>
<div class="t w c" style="left:296.1px;top:171.5px;font-size:11.5px;-webkit-text-stroke:0.35px #fff">16</div>
<div class="t w c" style="left:333.9px;top:171.5px;font-size:11.5px;-webkit-text-stroke:0.35px #fff">14</div>
<div class="t w c" style="left:371.7px;top:171.5px;font-size:11.5px;-webkit-text-stroke:0.35px #fff">12</div>
<div class="t w c" style="left:409.5px;top:171.5px;font-size:11.5px;-webkit-text-stroke:0.35px #fff">10</div>
<div class="t w c" style="left:447.3px;top:171.5px;font-size:11.5px;-webkit-text-stroke:0.35px #fff">8</div>
<div class="t w c" style="left:485.1px;top:171.5px;font-size:11.5px;-webkit-text-stroke:0.35px #fff">6</div>
<div class="t w c" style="left:522.9px;top:171.5px;font-size:11.5px;-webkit-text-stroke:0.35px #fff">4</div>
<div class="t w c" style="left:560.7px;top:171.5px;font-size:11.5px;-webkit-text-stroke:0.35px #fff">2</div>
<div class="t w c" style="left:598.5px;top:171.5px;font-size:11.5px;-webkit-text-stroke:0.35px #fff">0</div>
<div class="t w c" style="left:636.3px;top:171.5px;font-size:11.5px;-webkit-text-stroke:0.35px #fff">2</div>
<div class="t w c" style="left:674.1px;top:171.5px;font-size:11.5px;-webkit-text-stroke:0.35px #fff">4</div>
<div class="t w c" style="left:711.9px;top:171.5px;font-size:11.5px;-webkit-text-stroke:0.35px #fff">6</div>
<div class="t w c" style="left:749.7px;top:171.5px;font-size:11.5px;-webkit-text-stroke:0.35px #fff">8</div>
<div class="t w c" style="left:787.5px;top:171.5px;font-size:11.5px;-webkit-text-stroke:0.35px #fff">10</div>
<div class="t w c" style="left:825.3px;top:171.5px;font-size:11.5px;-webkit-text-stroke:0.35px #fff">12</div>
<div class="t w c" style="left:863.1px;top:171.5px;font-size:11.5px;-webkit-text-stroke:0.35px #fff">14</div>
<div class="t w c" style="left:900.9px;top:171.5px;font-size:11.5px;-webkit-text-stroke:0.35px #fff">16</div>
<div class="a" style="left:111px;top:250px;width:15px;height:360px;background:#787878;border:1px solid #5a5a5a"></div>
<i class="a" style="top:254.2px;left:117.0px;height:1px;width:3px;background:#e4e4e4"></i>
<i class="a" style="top:258.9px;left:115.5px;height:1px;width:6px;background:#e4e4e4"></i>
<i class="a" style="top:263.6px;left:117.0px;height:1px;width:3px;background:#e4e4e4"></i>
<i class="a" style="top:268.4px;left:116.5px;height:1px;width:4px;background:#e4e4e4"></i>
<i class="a" style="top:273.1px;left:117.0px;height:1px;width:3px;background:#e4e4e4"></i>
<i class="a" style="top:282.5px;left:117.0px;height:1px;width:3px;background:#e4e4e4"></i>
<i class="a" style="top:287.2px;left:116.5px;height:1px;width:4px;background:#e4e4e4"></i>
<i class="a" style="top:292.0px;left:117.0px;height:1px;width:3px;background:#e4e4e4"></i>
<i class="a" style="top:296.7px;left:115.5px;height:1px;width:6px;background:#e4e4e4"></i>
<i class="a" style="top:301.4px;left:117.0px;height:1px;width:3px;background:#e4e4e4"></i>
<i class="a" style="top:306.1px;left:116.5px;height:1px;width:4px;background:#e4e4e4"></i>
<i class="a" style="top:310.9px;left:117.0px;height:1px;width:3px;background:#e4e4e4"></i>
<i class="a" style="top:320.3px;left:117.0px;height:1px;width:3px;background:#e4e4e4"></i>
<i class="a" style="top:325.1px;left:116.5px;height:1px;width:4px;background:#e4e4e4"></i>
<i class="a" style="top:329.8px;left:117.0px;height:1px;width:3px;background:#e4e4e4"></i>
<i class="a" style="top:334.5px;left:115.5px;height:1px;width:6px;background:#e4e4e4"></i>
<i class="a" style="top:339.2px;left:117.0px;height:1px;width:3px;background:#e4e4e4"></i>
<i class="a" style="top:343.9px;left:116.5px;height:1px;width:4px;background:#e4e4e4"></i>
<i class="a" style="top:348.7px;left:117.0px;height:1px;width:3px;background:#e4e4e4"></i>
<i class="a" style="top:358.1px;left:117.0px;height:1px;width:3px;background:#e4e4e4"></i>
<i class="a" style="top:362.9px;left:116.5px;height:1px;width:4px;background:#e4e4e4"></i>
<i class="a" style="top:367.6px;left:117.0px;height:1px;width:3px;background:#e4e4e4"></i>
<i class="a" style="top:372.3px;left:115.5px;height:1px;width:6px;background:#e4e4e4"></i>
<i class="a" style="top:377.0px;left:117.0px;height:1px;width:3px;background:#e4e4e4"></i>
<i class="a" style="top:381.8px;left:116.5px;height:1px;width:4px;background:#e4e4e4"></i>
<i class="a" style="top:386.5px;left:117.0px;height:1px;width:3px;background:#e4e4e4"></i>
<i class="a" style="top:395.9px;left:117.0px;height:1px;width:3px;background:#e4e4e4"></i>
<i class="a" style="top:400.6px;left:116.5px;height:1px;width:4px;background:#e4e4e4"></i>
<i class="a" style="top:405.4px;left:117.0px;height:1px;width:3px;background:#e4e4e4"></i>
<i class="a" style="top:410.1px;left:115.5px;height:1px;width:6px;background:#e4e4e4"></i>
<i class="a" style="top:414.8px;left:117.0px;height:1px;width:3px;background:#e4e4e4"></i>
<i class="a" style="top:419.6px;left:116.5px;height:1px;width:4px;background:#e4e4e4"></i>
<i class="a" style="top:424.3px;left:117.0px;height:1px;width:3px;background:#e4e4e4"></i>
<i class="a" style="top:433.7px;left:117.0px;height:1px;width:3px;background:#e4e4e4"></i>
<i class="a" style="top:438.4px;left:116.5px;height:1px;width:4px;background:#e4e4e4"></i>
<i class="a" style="top:443.2px;left:117.0px;height:1px;width:3px;background:#e4e4e4"></i>
<i class="a" style="top:447.9px;left:115.5px;height:1px;width:6px;background:#e4e4e4"></i>
<i class="a" style="top:452.6px;left:117.0px;height:1px;width:3px;background:#e4e4e4"></i>
<i class="a" style="top:457.4px;left:116.5px;height:1px;width:4px;background:#e4e4e4"></i>
<i class="a" style="top:462.1px;left:117.0px;height:1px;width:3px;background:#e4e4e4"></i>
<i class="a" style="top:471.5px;left:117.0px;height:1px;width:3px;background:#e4e4e4"></i>
<i class="a" style="top:476.2px;left:116.5px;height:1px;width:4px;background:#e4e4e4"></i>
<i class="a" style="top:481.0px;left:117.0px;height:1px;width:3px;background:#e4e4e4"></i>
<i class="a" style="top:485.7px;left:115.5px;height:1px;width:6px;background:#e4e4e4"></i>
<i class="a" style="top:490.4px;left:117.0px;height:1px;width:3px;background:#e4e4e4"></i>
<i class="a" style="top:495.1px;left:116.5px;height:1px;width:4px;background:#e4e4e4"></i>
<i class="a" style="top:499.9px;left:117.0px;height:1px;width:3px;background:#e4e4e4"></i>
<i class="a" style="top:509.3px;left:117.0px;height:1px;width:3px;background:#e4e4e4"></i>
<i class="a" style="top:514.0px;left:116.5px;height:1px;width:4px;background:#e4e4e4"></i>
<i class="a" style="top:518.8px;left:117.0px;height:1px;width:3px;background:#e4e4e4"></i>
<i class="a" style="top:523.5px;left:115.5px;height:1px;width:6px;background:#e4e4e4"></i>
<i class="a" style="top:528.2px;left:117.0px;height:1px;width:3px;background:#e4e4e4"></i>
<i class="a" style="top:533.0px;left:116.5px;height:1px;width:4px;background:#e4e4e4"></i>
<i class="a" style="top:537.7px;left:117.0px;height:1px;width:3px;background:#e4e4e4"></i>
<i class="a" style="top:547.1px;left:117.0px;height:1px;width:3px;background:#e4e4e4"></i>
<i class="a" style="top:551.9px;left:116.5px;height:1px;width:4px;background:#e4e4e4"></i>
<i class="a" style="top:556.6px;left:117.0px;height:1px;width:3px;background:#e4e4e4"></i>
<i class="a" style="top:561.3px;left:115.5px;height:1px;width:6px;background:#e4e4e4"></i>
<i class="a" style="top:566.0px;left:117.0px;height:1px;width:3px;background:#e4e4e4"></i>
<i class="a" style="top:570.8px;left:116.5px;height:1px;width:4px;background:#e4e4e4"></i>
<i class="a" style="top:575.5px;left:117.0px;height:1px;width:3px;background:#e4e4e4"></i>
<i class="a" style="top:584.9px;left:117.0px;height:1px;width:3px;background:#e4e4e4"></i>
<i class="a" style="top:589.6px;left:116.5px;height:1px;width:4px;background:#e4e4e4"></i>
<i class="a" style="top:594.4px;left:117.0px;height:1px;width:3px;background:#e4e4e4"></i>
<i class="a" style="top:599.1px;left:115.5px;height:1px;width:6px;background:#e4e4e4"></i>
<i class="a" style="top:603.8px;left:117.0px;height:1px;width:3px;background:#e4e4e4"></i>
<div class="t w" style="left:118.5px;top:278.3px;font-size:11.5px;-webkit-text-stroke:0.35px #fff;transform:translate(-50%,-50%) rotate(-90deg)">8</div>
<div class="t w" style="left:118.5px;top:316.1px;font-size:11.5px;-webkit-text-stroke:0.35px #fff;transform:translate(-50%,-50%) rotate(-90deg)">6</div>
<div class="t w" style="left:118.5px;top:353.9px;font-size:11.5px;-webkit-text-stroke:0.35px #fff;transform:translate(-50%,-50%) rotate(-90deg)">4</div>
<div class="t w" style="left:118.5px;top:391.7px;font-size:11.5px;-webkit-text-stroke:0.35px #fff;transform:translate(-50%,-50%) rotate(-90deg)">2</div>
<div class="t w" style="left:118.5px;top:429.5px;font-size:11.5px;-webkit-text-stroke:0.35px #fff;transform:translate(-50%,-50%) rotate(-90deg)">0</div>
<div class="t w" style="left:118.5px;top:467.3px;font-size:11.5px;-webkit-text-stroke:0.35px #fff;transform:translate(-50%,-50%) rotate(-90deg)">2</div>
<div class="t w" style="left:118.5px;top:505.1px;font-size:11.5px;-webkit-text-stroke:0.35px #fff;transform:translate(-50%,-50%) rotate(-90deg)">4</div>
<div class="t w" style="left:118.5px;top:542.9px;font-size:11.5px;-webkit-text-stroke:0.35px #fff;transform:translate(-50%,-50%) rotate(-90deg)">6</div>
<div class="t w" style="left:118.5px;top:580.7px;font-size:11.5px;-webkit-text-stroke:0.35px #fff;transform:translate(-50%,-50%) rotate(-90deg)">8</div>
<div class="a" style="left:278px;top:250px;width:640px;height:360px;background:#fff"></div>
<div class="a" style="left:325px;top:305px;width:349px;height:250px;background:#fff;border:1px solid #d8585a"></div>
<div class="a" style="left:325px;top:305px;width:349px;height:18px;background:#c9484b"></div>
<div class="t w" style="left:330px;top:310.5px;font-size:7.5px">PPT拼图</div>
<svg style="left:624px;top:309px" width="46" height="11" viewBox="0 0 46 11"><circle cx="5" cy="5.5" r="3.6" fill="none" stroke="#fff" stroke-width="0.8"/><text x="5" y="7.6" font-size="6" fill="#fff" text-anchor="middle" font-family="Liberation Sans,sans-serif">?</text><path d="M19.5 5.5 H25" stroke="#e9a9aa" stroke-width="0.8"/><path d="M37.5 2.5 L43.5 8.5 M43.5 2.5 L37.5 8.5" stroke="#fff" stroke-width="1"/></svg>
<div class="t d6" style="left:331px;top:334.3px;color:#444">图片宽度<span style="font-size:6.8px"> (px)</span></div>
<div class="a" style="left:372px;top:337.0px;width:72px;height:1.5px;background:#d4d4d4"></div>
<div class="a" style="left:379.8px;top:334.0px;width:3.5px;height:7px;border-radius:1.5px;background:#cf4a4e"></div>
<div class="a" style="left:448px;top:331.0px;width:55px;height:13px;background:#fafafa;border:1px solid #dcdcdc"></div>
<div class="a" style="left:475px;top:331.0px;width:28px;height:13px;background:#e4e4e4;border:1px solid #d2d2d2"></div>
<div class="a" style="left:489px;top:331.0px;width:1px;height:13px;background:#f6f6f6"></div>
<div class="t" style="left:448px;width:24px;text-align:right;top:334.1px;font-size:6.8px;color:#8e8e8e">844</div>
<svg style="left:478px;top:335.0px" width="22" height="5" viewBox="0 0 22 5"><path d="M1.5 1 L4 3.7 L6.5 1 M15.5 3.7 L18 1 L20.5 3.7" fill="none" stroke="#333" stroke-width="1"/></svg>
<div class="a" style="left:331px;top:349.8px;width:9px;height:9px;background:#cf4a4e"></div>
<svg style="left:331px;top:349.8px" width="9" height="9" viewBox="0 0 9 9"><path d="M1.8 4.5 L3.8 6.5 L7.4 2.3" fill="none" stroke="#fff" stroke-width="1.2"/></svg>
<div class="t d6" style="left:343px;top:351.1px;color:#444">包含封面</div>
<div class="a" style="left:389.5px;top:349.8px;width:9px;height:9px;background:#fff;border:1px solid #cfcfcf"></div>
<div class="t d6" style="left:401px;top:351.1px;color:#444">包含封底</div>
<div class="a" style="left:447.5px;top:349.8px;width:9px;height:9px;background:#fff;border:1px solid #cfcfcf"></div>
<div class="t d6" style="left:459px;top:351.1px;color:#444">不足补白</div>
<div class="t d6" style="left:331px;top:368.0px;color:#444">横向数量</div>
<div class="a" style="left:372px;top:370.7px;width:72px;height:1.5px;background:#d4d4d4"></div>
<div class="a" style="left:372.3px;top:367.7px;width:3.5px;height:7px;border-radius:1.5px;background:#cf4a4e"></div>
<div class="a" style="left:448px;top:364.7px;width:55px;height:13px;background:#fafafa;border:1px solid #dcdcdc"></div>
<div class="a" style="left:475px;top:364.7px;width:28px;height:13px;background:#e4e4e4;border:1px solid #d2d2d2"></div>
<div class="a" style="left:489px;top:364.7px;width:1px;height:13px;background:#f6f6f6"></div>
<div class="t" style="left:448px;width:24px;text-align:right;top:367.8px;font-size:6.8px;color:#8e8e8e">1</div>
<svg style="left:478px;top:368.7px" width="22" height="5" viewBox="0 0 22 5"><path d="M1.5 1 L4 3.7 L6.5 1 M15.5 3.7 L18 1 L20.5 3.7" fill="none" stroke="#333" stroke-width="1"/></svg>
<div class="t d6" style="left:331px;top:384.8px;color:#444">外围边距<span style="font-size:6.8px"> (px)</span></div>
<div class="a" style="left:372px;top:387.5px;width:72px;height:1.5px;background:#d4d4d4"></div>
<div class="a" style="left:386.3px;top:384.5px;width:3.5px;height:7px;border-radius:1.5px;background:#cf4a4e"></div>
<div class="a" style="left:448px;top:381.5px;width:55px;height:13px;background:#fafafa;border:1px solid #dcdcdc"></div>
<div class="a" style="left:475px;top:381.5px;width:28px;height:13px;background:#e4e4e4;border:1px solid #d2d2d2"></div>
<div class="a" style="left:489px;top:381.5px;width:1px;height:13px;background:#f6f6f6"></div>
<div class="t" style="left:448px;width:24px;text-align:right;top:384.6px;font-size:6.8px;color:#8e8e8e">2</div>
<svg style="left:478px;top:385.5px" width="22" height="5" viewBox="0 0 22 5"><path d="M1.5 1 L4 3.7 L6.5 1 M15.5 3.7 L18 1 L20.5 3.7" fill="none" stroke="#333" stroke-width="1"/></svg>
<div class="t d6" style="left:331px;top:401.8px;color:#444">内侧间距<span style="font-size:6.8px"> (px)</span></div>
<div class="a" style="left:372px;top:404.5px;width:72px;height:1.5px;background:#d4d4d4"></div>
<div class="a" style="left:386.3px;top:401.5px;width:3.5px;height:7px;border-radius:1.5px;background:#cf4a4e"></div>
<div class="a" style="left:448px;top:398.5px;width:55px;height:13px;background:#fafafa;border:1px solid #dcdcdc"></div>
<div class="a" style="left:475px;top:398.5px;width:28px;height:13px;background:#e4e4e4;border:1px solid #d2d2d2"></div>
<div class="a" style="left:489px;top:398.5px;width:1px;height:13px;background:#f6f6f6"></div>
<div class="t" style="left:448px;width:24px;text-align:right;top:401.6px;font-size:6.8px;color:#8e8e8e">2</div>
<svg style="left:478px;top:402.5px" width="22" height="5" viewBox="0 0 22 5"><path d="M1.5 1 L4 3.7 L6.5 1 M15.5 3.7 L18 1 L20.5 3.7" fill="none" stroke="#333" stroke-width="1"/></svg>
<div class="t d6" style="left:331px;top:418.8px;color:#444">背景颜色</div>
<div class="a" style="left:448px;top:415px;width:55px;height:14px;background:#d2d2d2"></div>
<div class="a" style="left:331px;top:434.3px;width:9px;height:9px;background:#fff;border:1px solid #cfcfcf"></div>
<div class="t d6" style="left:343px;top:435.6px;color:#444">文字水印</div>
<div class="a" style="left:331.0px;top:491.8px;width:9px;height:9px;border-radius:5px;background:#fff;border:1px solid #cf4a4e"></div>
<div class="a" style="left:333.0px;top:493.8px;width:5px;height:5px;border-radius:3px;background:#cf4a4e"></div>
<div class="t d6" style="left:342.6px;top:493.1px;color:#444">所有幻灯片</div>
<div class="a" style="left:389.2px;top:491.8px;width:9px;height:9px;border-radius:5px;background:#fff;border:1px solid #cfcfcf"></div>
<div class="t d6" style="left:400.7px;top:493.1px;color:#444">所选幻灯片</div>
<div class="a" style="left:447.3px;top:491.8px;width:9px;height:9px;border-radius:5px;background:#fff;border:1px solid #cfcfcf"></div>
<div class="t d6" style="left:459px;top:493.1px;color:#444">幻灯片序列</div>
<div class="a" style="left:331px;top:508.5px;width:9px;height:9px;background:#fff;border:1px solid #cfcfcf"></div>
<div class="t d6" style="left:343px;top:509.8px;color:#444">包含隐藏页面</div>
<div class="t d6" style="left:331px;top:524.1999999999999px;color:#444">目标尺寸：<span style="font-size:6.9px">&nbsp;852 px *&nbsp; 6227 px</span></div>
<div class="a" style="left:331px;top:534.5px;width:172px;height:13px;background:#e6e6e6"></div>
<div class="t d6 c" style="left:417px;top:538px;color:#333">另存为</div>
<div class="a" style="left:507px;top:331px;width:159px;height:217px;background:#fff;border:1px solid #c9c9c9;border-bottom:none"></div>
<div class="a" style="left:664.5px;top:331px;width:2px;height:217px;background:#b9b9b9"></div>
<div class="a" style="left:508px;top:419.5px;width:157px;height:2.5px;background:#d0d0d0"></div>
<div class="a" style="left:508px;top:509.5px;width:157px;height:2.5px;background:#d0d0d0"></div>
<div class="t" style="left:517.5px;top:350.5px;font-size:7.3px;color:#3a3a3a;letter-spacing:0.05px;transform:scaleY(1.15);transform-origin:0 50%">PPT设计师必备插件</div>
<div class="t" style="left:517.5px;top:362.5px;font-size:8px;color:#6f68e8;font-style:italic;letter-spacing:0.5px">islide</div>
<div class="a" style="left:517.5px;top:373px;width:25px;height:0;border-top:1px dotted #cfcfe8"></div>
<svg style="left:575px;top:335px" width="90" height="80" viewBox="575 335 90 80"><path d="M593 390.5 L664 379 V408.8 H586 C583 408.8 582 406 583.5 404 C585.5 402 590 403 593 401 Z" fill="#6c63ff"/><circle cx="658.8" cy="354.5" r="5.8" fill="#f0557a"/><path d="M642.5 341.5 C636.5 349 632 360 633.5 369.5 C635 378.5 642 383 650.5 382 C659 381 664.5 373 663 363.5 C661 352.5 651 345 642.5 341.5Z" fill="#6c63ff"/><path d="M645 352 L647 384 M646 364 L642.5 359 M646.4 371 L650.5 366 M646.7 377 L643.5 374" stroke="#3f3d78" stroke-width="0.8" fill="none"/><path d="M626 394 L626.5 386 M626.3 390 L629 387 M626 394 H649 M640 394 l0.5 -4 M648 394 l0 -3" stroke="#3f3d78" stroke-width="0.7" fill="none"/><rect x="597.5" y="367.5" width="21.5" height="3.5" fill="#9a98a8"/><rect x="597.5" y="371.5" width="9" height="1" fill="#7a72f0"/><rect x="591" y="351" width="5" height="1" fill="#8a84f0"/><circle cx="628.5" cy="406" r="0.8" fill="#fff"/><circle cx="632.5" cy="406" r="0.8" fill="#fff"/></svg>
<div class="a" style="left:508px;top:422px;width:157px;height:88px;background:#2a2a2a;overflow:hidden"><div class="a" style="left:0;top:0;width:157px;height:88px;background:linear-gradient(180deg,#6a6a6a 0,#4c4c4c 14%,#343434 34%,#262626 60%,#1d1d1d 100%)"></div><svg style="left:0;top:0" width="157" height="88" viewBox="0 0 157 88"><defs><linearGradient id="tw" x1="0" y1="0" x2="0" y2="1"><stop offset="0" stop-color="#777"/><stop offset="0.45" stop-color="#4a4a4a"/><stop offset="1" stop-color="#2c2c2c"/></linearGradient></defs><path d="M0 0 H66 L46 88 H0Z" fill="#171717" opacity="0.8"/><path d="M157 0 H100 L116 88 H157Z" fill="#171717" opacity="0.8"/><path d="M0 31 L56 11" stroke="#111" stroke-width="1.6" opacity="0.55"/><path d="M157 31 L101 11" stroke="#111" stroke-width="1.6" opacity="0.55"/><path d="M0 42 L54 22" stroke="#111" stroke-width="1.6" opacity="0.55"/><path d="M157 42 L103 22" stroke="#111" stroke-width="1.6" opacity="0.55"/><path d="M0 53 L52 33" stroke="#111" stroke-width="1.6" opacity="0.55"/><path d="M157 53 L105 33" stroke="#111" stroke-width="1.6" opacity="0.55"/><path d="M0 64 L50 44" stroke="#111" stroke-width="1.6" opacity="0.55"/><path d="M157 64 L107 44" stroke="#111" stroke-width="1.6" opacity="0.55"/><path d="M0 75 L48 55" stroke="#111" stroke-width="1.6" opacity="0.55"/><path d="M157 75 L109 55" stroke="#111" stroke-width="1.6" opacity="0.55"/><path d="M0 86 L46 66" stroke="#111" stroke-width="1.6" opacity="0.55"/><path d="M157 86 L111 66" stroke="#111" stroke-width="1.6" opacity="0.55"/><path d="M0 97 L44 77" stroke="#111" stroke-width="1.6" opacity="0.55"/><path d="M157 97 L113 77" stroke="#111" stroke-width="1.6" opacity="0.55"/><path d="M0 108 L42 88" stroke="#111" stroke-width="1.6" opacity="0.55"/><path d="M157 108 L115 88" stroke="#111" stroke-width="1.6" opacity="0.55"/><path d="M-6 88 L30 0" stroke="#6a6a6a" stroke-width="0.7" opacity="0.22"/><path d="M163 88 L127 0" stroke="#6a6a6a" stroke-width="0.7" opacity="0.22"/><path d="M2 88 L38 0" stroke="#6a6a6a" stroke-width="0.7" opacity="0.22"/><path d="M155 88 L119 0" stroke="#6a6a6a" stroke-width="0.7" opacity="0.22"/><path d="M10 88 L46 0" stroke="#6a6a6a" stroke-width="0.7" opacity="0.22"/><path d="M147 88 L111 0" stroke="#6a6a6a" stroke-width="0.7" opacity="0.22"/><path d="M18 88 L54 0" stroke="#6a6a6a" stroke-width="0.7" opacity="0.22"/><path d="M139 88 L103 0" stroke="#6a6a6a" stroke-width="0.7" opacity="0.22"/><path d="M26 88 L62 0" stroke="#6a6a6a" stroke-width="0.7" opacity="0.22"/><path d="M131 88 L95 0" stroke="#6a6a6a" stroke-width="0.7" opacity="0.22"/><path d="M34 88 L70 0" stroke="#6a6a6a" stroke-width="0.7" opacity="0.22"/><path d="M123 88 L87 0" stroke="#6a6a6a" stroke-width="0.7" opacity="0.22"/><path d="M42 88 L78 0" stroke="#6a6a6a" stroke-width="0.7" opacity="0.22"/><path d="M115 88 L79 0" stroke="#6a6a6a" stroke-width="0.7" opacity="0.22"/><path d="M76 0 H98 L108 88 H54Z" fill="url(#tw)" opacity="0.9"/><path d="M82 0 L70 88 M87 0 L82 88 M92 0 L95 88" stroke="#222" stroke-width="1" opacity="0.5"/><path d="M0 0 H157 V10 H0Z" fill="#7a7a7a" opacity="0.35"/></svg></div>
<div class="t w c" style="left:586px;top:444px;font-size:16.2px;font-weight:500;letter-spacing:0.4px">小白的报告</div>
<div class="t w c" style="left:586px;top:462.5px;font-size:16.2px;font-weight:500;letter-spacing:0.4px">之年终总结</div>
<div class="t c" style="left:586px;top:482px;font-size:3.2px;letter-spacing:1.5px;color:#cfcfcf">ANNUAL REVIEW OF UMMA</div>
<div class="t" style="left:549.5px;top:535.5px;font-size:5px;font-weight:bold;color:#2a7a9a">80%</div>
<div class="a" style="left:549.5px;top:541px;width:28px;height:1px;background:#7ab0c8"></div>
<svg style="left:574px;top:534px" width="26" height="14" viewBox="0 0 26 14"><path d="M1 14 V8 L7 5 V14Z" fill="#1f6e73"/><path d="M7 5 L13 2 L24 9 V11 L13 5 L7 8Z" fill="#b9cdd3"/><path d="M13 8 L22 13 V14 H13Z" fill="#d7e2e6"/></svg>
<div class="a" style="left:742px;top:433px;width:10px;height:1px;background:#c6504f"></div>
<div class="t" style="left:739.5px;top:456px;font-size:21px;font-style:italic;font-weight:400;letter-spacing:3px;color:#c24e4c">导出图片</div>
<div class="t" style="left:739.5px;top:493px;font-size:21px;font-style:italic;font-weight:400;letter-spacing:1.8px;color:#c24e4c">一键导出长图</div>
<div class="a" style="left:325px;top:192px;width:1px;height:471px;background:repeating-linear-gradient(180deg,#b8604c 0,#b8604c 3px,#ead0c8 3px,#ead0c8 6px)"></div>
<div class="a" style="left:598px;top:192px;width:1px;height:471px;background:repeating-linear-gradient(180deg,#b8604c 0,#b8604c 3px,#ead0c8 3px,#ead0c8 6px)"></div>
<div class="a" style="left:871px;top:192px;width:1px;height:471px;background:repeating-linear-gradient(180deg,#b8604c 0,#b8604c 3px,#ead0c8 3px,#ead0c8 6px)"></div>
<div class="a" style="left:133px;top:264px;width:928px;height:1px;background:repeating-linear-gradient(90deg,#b8604c 0,#b8604c 3px,#ead0c8 3px,#ead0c8 6px)"></div>
<div class="a" style="left:133px;top:430px;width:928px;height:1px;background:repeating-linear-gradient(90deg,#b8604c 0,#b8604c 3px,#ead0c8 3px,#ead0c8 6px)"></div>
<div class="a" style="left:133px;top:595px;width:928px;height:1px;background:repeating-linear-gradient(90deg,#b8604c 0,#b8604c 3px,#ead0c8 3px,#ead0c8 6px)"></div>
<div class="a" style="left:1062px;top:168px;width:15px;height:446px;background:#5b5b5b"></div>
<div class="a" style="left:1062px;top:168px;width:15px;height:15px;background:#a3a3a3;border:1px solid #4a4a4a"></div>
<div class="a" style="left:1065px;top:173px;width:0;height:0;border-left:4px solid transparent;border-right:4px solid transparent;border-bottom:4px solid #2e2e2e"></div>
<div class="a" style="left:1062px;top:571px;width:15px;height:28px;background:#9c9c9c;border:1px solid #555"></div>
<div class="a" style="left:1062px;top:599px;width:15px;height:15px;background:#a3a3a3;border:1px solid #4a4a4a"></div>
<div class="a" style="left:1065px;top:605px;width:0;height:0;border-left:4px solid transparent;border-right:4px solid transparent;border-top:4px solid #2e2e2e"></div>
<div class="a" style="left:1078px;top:168px;width:1px;height:504px;background:#555"></div>
<div class="a" style="left:1066px;top:620px;width:0;height:0;border-left:4px solid transparent;border-right:4px solid transparent;border-bottom:4px solid #333"></div>
<div class="a" style="left:1066px;top:624px;width:0;height:0;border-left:4px solid transparent;border-right:4px solid transparent;border-bottom:4px solid #333"></div>
<div class="a" style="left:1066px;top:637px;width:0;height:0;border-left:4px solid transparent;border-right:4px solid transparent;border-top:4px solid #333"></div>
<div class="a" style="left:1066px;top:641px;width:0;height:0;border-left:4px solid transparent;border-right:4px solid transparent;border-top:4px solid #333"></div>
<div class="t" style="left:1092px;top:184px;font-size:20.8px;color:#ededed">设置背景格式</div>
<div class="a" style="left:1293px;top:187px;width:0;height:0;border-left:5px solid transparent;border-right:5px solid transparent;border-top:5px solid #f4f4f4"></div>
<svg style="left:1334px;top:184px" width="10" height="10" viewBox="0 0 10 10"><path d="M1 1L9 9M9 1L1 9" stroke="#fff" stroke-width="2" fill="none"/></svg>
<svg style="left:1096px;top:217px" width="26" height="26" viewBox="0 0 26 26"><path d="M11 4 L21 13 L11.5 21.5 L2 12.5 Z" fill="#c8371b" stroke="#f6f6f6" stroke-width="1.3" stroke-linejoin="round"/><path d="M10.5 12 V3.5 a2.3 2.3 0 0 1 4.6 0 V7" fill="none" stroke="#f6f6f6" stroke-width="1.3"/><circle cx="10.5" cy="12" r="1.3" fill="#f6f6f6"/><path d="M15.5 7.6 C20 6.6 25.2 10 24.8 16 C24.6 19 23.8 21.5 22.8 23.6 C22.9 19.5 22.6 16.2 21 13.2 Z" fill="#f6f6f6"/></svg>
<svg style="left:1092px;top:250px" width="260" height="12" viewBox="0 0 260 12"><path d="M0.5 9.5 H11 L16.5 1.5 L22 9.5 H256" fill="none" stroke="#cfcfcf" stroke-width="1"/></svg>
<div class="a" style="left:1100px;top:270px;width:0;height:0;border-left:6px solid transparent;border-bottom:6px solid #f0f0f0"></div>
<div class="t" style="left:1114px;top:268.5px;font-size:12px;color:#f8f8f8;font-weight:700">填充</div>
<div class="a" style="left:1114px;top:298px;width:13px;height:13px;border-radius:7px;border:1px solid #3c3c3c;background:#2b2b2b"></div>
<div class="a" style="left:1117.5px;top:302px;width:6px;height:6px;border-radius:3px;background:#fff"></div>
<div class="t pt" style="left:1132px;top:299.5px">纯色填充(<u>S</u>)</div>
<div class="a" style="left:1114px;top:323px;width:13px;height:13px;border-radius:7px;border:1px solid #3c3c3c;background:#505050"></div>
<div class="t pt" style="left:1132px;top:324.5px">渐变填充(<u>G</u>)</div>
<div class="a" style="left:1114px;top:348px;width:13px;height:13px;border-radius:7px;border:1px solid #3c3c3c;background:#505050"></div>
<div class="t pt" style="left:1132px;top:349.5px">图片或纹理填充(<u>P</u>)</div>
<div class="a" style="left:1114px;top:373px;width:13px;height:13px;border-radius:7px;border:1px solid #3c3c3c;background:#505050"></div>
<div class="t pt" style="left:1132px;top:374.5px">图案填充(<u>A</u>)</div>
<div class="a" style="left:1114px;top:399px;width:13px;height:13px;border:1px solid #3c3c3c;background:#505050"></div>
<div class="t pt" style="left:1132px;top:399.5px">隐藏背景图形(<u>H</u>)</div>
<div class="a" style="left:1113px;top:424px;width:216px;height:1px;background:#8f8f8f"></div>
<div class="t pt" style="left:1123px;top:439px">颜色(<u>C</u>)</div>
<div class="a" style="left:1286px;top:432px;width:43px;height:26px;background:#d6d6d6;border:1px solid #8c8c8c"></div>
<svg style="left:1293px;top:436px" width="20" height="18" viewBox="0 0 20 18"><path d="M6.5 2.5 L12.5 8.5 L7.5 12.5 L2.5 7.5 Z" fill="#fdfdfd" stroke="#222" stroke-width="1.4"/><path d="M6 2 l3 -1.5" stroke="#333" stroke-width="1" fill="none"/><path d="M13.8 8 c1 1.6 1.6 2.6 1.6 3.5 a1.4 1.4 0 0 1 -2.8 0 c0 -0.9 0.5 -1.9 1.2 -3.5z" fill="#333"/><rect x="1" y="13.5" width="15" height="3.5" fill="#fff"/></svg>
<div class="a" style="left:1316px;top:443.5px;width:0;height:0;border-left:3.5px solid transparent;border-right:3.5px solid transparent;border-top:4px solid #333"></div>
<div class="t pt" style="left:1123px;top:471px">透明度(<u>T</u>)</div>
<div class="a" style="left:1185px;top:472px;width:2px;height:10px;background:#f4f4f4"></div>
<div class="a" style="left:1186px;top:476.5px;width:35px;height:1px;background:#e6e6e6"></div>
<div class="a" style="left:1226px;top:465px;width:103px;height:26px;background:#d6d6d6;border:1px solid #8c8c8c"></div>
<div class="t" style="left:1233px;top:471px;font-size:12px;color:#333">0%</div>
<div class="a" style="left:1316.5px;top:470.5px;width:0;height:0;border-left:4px solid transparent;border-right:4px solid transparent;border-bottom:4.5px solid #3a3a3a"></div>
<div class="a" style="left:1316.5px;top:481.5px;width:0;height:0;border-left:4px solid transparent;border-right:4px solid transparent;border-top:4.5px solid #3a3a3a"></div>
<div class="a" style="left:1093px;top:629px;width:90px;height:23px;background:#e0e0e0;border:1px solid #9a9a9a"></div>
<div class="t" style="left:1101px;top:634px;font-size:12px;color:#1e1e1e">应用到全部(<u>L</u>)</div>
<div class="a" style="left:1194px;top:629px;width:81px;height:23px;background:#cdcdcd;border:1px solid #a8a8a8"></div>
<div class="t" style="left:1202px;top:634px;font-size:12px;color:#9a9a9a">重置背景(<u>B</u>)</div>
<div class="a" style="left:1353px;top:630px;width:7px;height:58px;background:#2a2a2a;border-left:1px solid #8a8a8a;border-top:1px solid #8a8a8a;border-radius:3px 0 0 0"></div>
<div class="a" style="left:1356px;top:658px;width:4px;height:24px;background:repeating-linear-gradient(#c9a93a 0,#c9a93a 1px,#4a3f1c 1px,#4a3f1c 2px)"></div>
<div class="a" style="left:0;top:672px;width:1360px;height:1px;background:#555"></div>
<div class="a" style="left:0;top:673px;width:1353px;height:21px;background:#bfbbb8"></div>
<div class="t" style="left:5px;top:677.7px;font-size:12px;word-spacing:1px;color:#333">幻灯片 第 15 张，共 15 张</div>
<div class="t" style="left:201px;top:677.7px;font-size:12px;color:#333">中文(中国)</div>
<svg style="left:167px;top:676px" width="17" height="15" viewBox="0 0 17 15"><path d="M1.5 1.6 H6.6 V11.4 H1.5Z M8.4 1.6 H14.4 V11.4 H8.4 M6.6 11.4 L7.5 12.8 L8.4 11.4" fill="none" stroke="#fafafa" stroke-width="1.2"/><path d="M9.8 4.4 L13.2 9 M13.2 4.4 L9.8 9" stroke="#fafafa" stroke-width="1.3"/></svg>
<svg style="left:950px;top:677px" width="13" height="12" viewBox="0 0 13 12"><path d="M4 3.5 L6.5 1 L9 3.5 M1 6 H12 M1 8.5 H12 M1 11 H12" fill="none" stroke="#f6f6f6" stroke-width="1.1"/></svg>
<div class="t" style="left:966px;top:677.7px;font-size:12px;color:#2a2a2a">备注</div>
<div class="a" style="left:1008px;top:673px;width:39px;height:21px;background:#a09d9b"></div>
<svg style="left:1020px;top:676px" width="15" height="15" viewBox="0 0 15 15"><rect x="1.2" y="1.2" width="12.6" height="12.6" fill="none" stroke="#fff" stroke-width="2.2"/><rect x="5" y="4.4" width="5.4" height="3.4" fill="none" stroke="#fff" stroke-width="1.5"/><path d="M3.5 10.8 H11.5" stroke="#fff" stroke-width="1.6"/></svg>
<svg style="left:1059px;top:676px" width="15" height="15" viewBox="0 0 15 15"><g fill="#fff"><rect x="0" y="0.5" width="6.5" height="6"/><rect x="8.5" y="0.5" width="6.5" height="6"/><rect x="0" y="8.5" width="6.5" height="6"/><rect x="8.5" y="8.5" width="6.5" height="6"/></g></svg>
<svg style="left:1096px;top:676px" width="15" height="15" viewBox="0 0 15 15"><path d="M1 2 H6 L7.5 3 L9 2 H14 V12 H9 L7.5 13.5 L6 12 H1 Z M7.5 3 V13" fill="none" stroke="#fff" stroke-width="1.5"/><path d="M2.5 4.5H6M2.5 6.5H6M2.5 8.5H6M9 4.5H12.5M9 6.5H12.5M9 8.5H12.5" stroke="#fff" stroke-width="1.1"/></svg>
<svg style="left:1134px;top:676px" width="17" height="15" viewBox="0 0 17 15"><path d="M0.5 1.5 H16.5 M2.5 1.5 V8.5 H14.5 V1.5 M5.5 4.8 H11.5 M8.5 8.5 V12.5 M5 13.5 H12" fill="none" stroke="#fff" stroke-width="1.5"/></svg>
<div class="a" style="left:1164px;top:682.5px;width:7px;height:2px;background:#fff"></div>
<div class="a" style="left:1177px;top:683px;width:98px;height:1px;background:#8a8785"></div>
<div class="a" style="left:1225px;top:680px;width:1px;height:7px;background:#8a8785"></div>
<div class="a" style="left:1198px;top:677px;width:5px;height:13px;background:#6e6b69"></div>
<div class="a" style="left:1279px;top:682.5px;width:8px;height:2px;background:#fff"></div>
<div class="a" style="left:1282px;top:679.5px;width:2px;height:8px;background:#fff"></div>
<div class="t" style="left:1298px;top:677.3px;font-size:13px;color:#333">50%</div>
<svg style="left:1343px;top:677px" width="11" height="13" viewBox="0 0 11 13"><rect x="0.7" y="0.7" width="10" height="11.6" fill="none" stroke="#fff" stroke-width="1.3"/><path d="M3 5 L5.5 2.5 L8 5 M3 8 L5.5 10.5 L8 8 M5.5 3 V10" fill="none" stroke="#fff" stroke-width="1"/></svg>
<div class="a" style="left:862px;top:171px;width:0;height:15px;border-left:1px dotted #fff"></div>
<svg style="left:839px;top:197px" width="14" height="21" viewBox="0 0 14 21"><path d="M1.2 1.5 V16.8 L4.9 13.4 L7.6 19.4 L10 18.3 L7.4 12.5 H12.4 Z" fill="#fff" stroke="#1a1a1a" stroke-width="1.1" stroke-linejoin="round"/></svg>
</body></html>
